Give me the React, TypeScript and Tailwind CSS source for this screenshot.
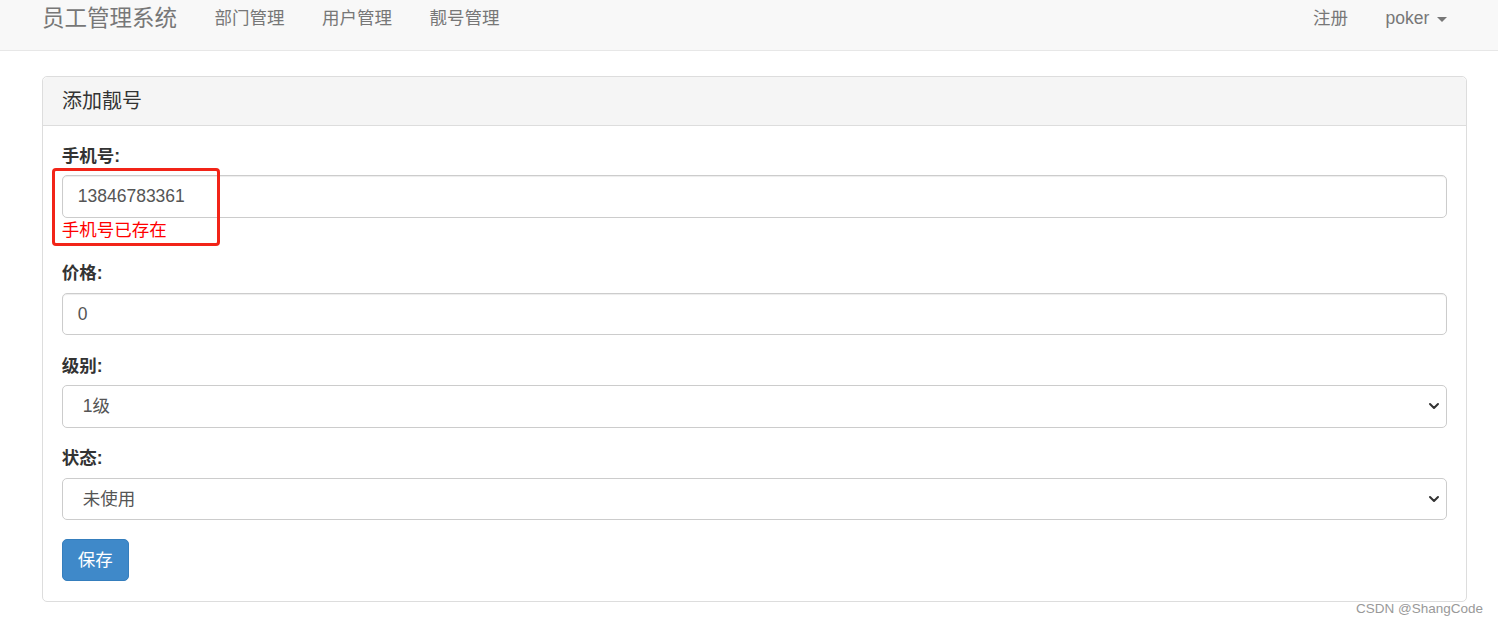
import { ChevronDown } from "lucide-react"

const font = "font-['Liberation_Sans','Noto_Sans_CJK_SC',sans-serif]"

function NavBar() {
    return (
        <div className="h-[51px] bg-[#f8f8f8] border-b border-[#e7e7e7] flex justify-between pl-[42px] pr-[32px] pt-[6px] text-[#777]">
            <div className="flex items-start">
                <span className="text-[22.5px] leading-[25px] pr-[18.75px]">员工管理系统</span>
                <span className="text-[17.5px] leading-[25px] px-[18.75px]">部门管理</span>
                <span className="text-[17.5px] leading-[25px] px-[18.75px]">用户管理</span>
                <span className="text-[17.5px] leading-[25px] px-[18.75px]">靓号管理</span>
            </div>
            <div className="flex items-start">
                <span className="text-[17.5px] leading-[25px] px-[18.75px]">注册</span>
                <span className="text-[17.5px] leading-[25px] px-[18.75px] flex items-center">
                    poker
                    <span className="ml-[8px] mt-[2px] w-0 h-0 border-l-[5px] border-r-[5px] border-t-[5px] border-l-transparent border-r-transparent border-t-[#777]" />
                </span>
            </div>
        </div>
    )
}

function Field({ label, children }: { label: string, children: React.ReactNode }) {
    return (
        <div className="mb-[18.75px] relative">
            <label className="block font-bold text-[#333] text-[17.5px] leading-[25px] mb-[6.25px]">{label}</label>
            {children}
        </div>
    )
}

function TextBox({ value }: { value: string }) {
    return (
        <div className="h-[42.5px] border border-[#ccc] rounded-[5px] bg-white px-[15px] flex items-center text-[#555] text-[17.5px] shadow-[inset_0_1px_1px_rgba(0,0,0,0.075)]">
            {value}
        </div>
    )
}

function SelectBox({ value }: { value: string }) {
    return (
        <div className="h-[42.5px] border border-[#ccc] rounded-[5px] bg-white pl-[20px] pr-[4px] flex items-center justify-between text-[#555] text-[17.5px]">
            <span>{value}</span>
            <ChevronDown size={16} strokeWidth={3} className="text-[#333]" />
        </div>
    )
}

export default function App() {
    return (
        <div className={`${font} bg-white w-[1498px] h-[625px] relative overflow-hidden`}>
            <NavBar />

            {/* panel */}
            <div className="mt-[25px] ml-[42px] w-[1425px] border border-[#ddd] rounded-[5px] bg-white">
                <div className="bg-[#f5f5f5] border-b border-[#ddd] rounded-t-[5px] px-[19px] pt-[13px] pb-[13px] text-[20px] leading-[22px] text-[#333]">
                    添加靓号
                </div>

                <div className="px-[18.75px] pt-[17.75px] pb-[19.75px]">
                    <Field label="手机号:">
                        <TextBox value="13846783361" />
                        <div className="text-[#f00] text-[17.5px] leading-[25px]">手机号已存在</div>
                        <div className="absolute left-[-10px] top-[24px] w-[168px] h-[78px] border-[3px] border-[#f22418] rounded-[4px]" />
                    </Field>

                    <Field label="价格:">
                        <TextBox value="0" />
                    </Field>

                    <Field label="级别:">
                        <SelectBox value="1级" />
                    </Field>

                    <Field label="状态:">
                        <SelectBox value="未使用" />
                    </Field>

                    <button className="h-[42.5px] px-[15px] bg-[#3f89c9] border border-[#357ebd] rounded-[5px] text-white text-[17.5px]">
                        保存
                    </button>
                </div>
            </div>

            {/* watermark */}
            <div className="absolute right-[15px] top-[599px] text-[13.5px] text-[#999] leading-[20px]">CSDN @ShangCode</div>
        </div>
    )
}
